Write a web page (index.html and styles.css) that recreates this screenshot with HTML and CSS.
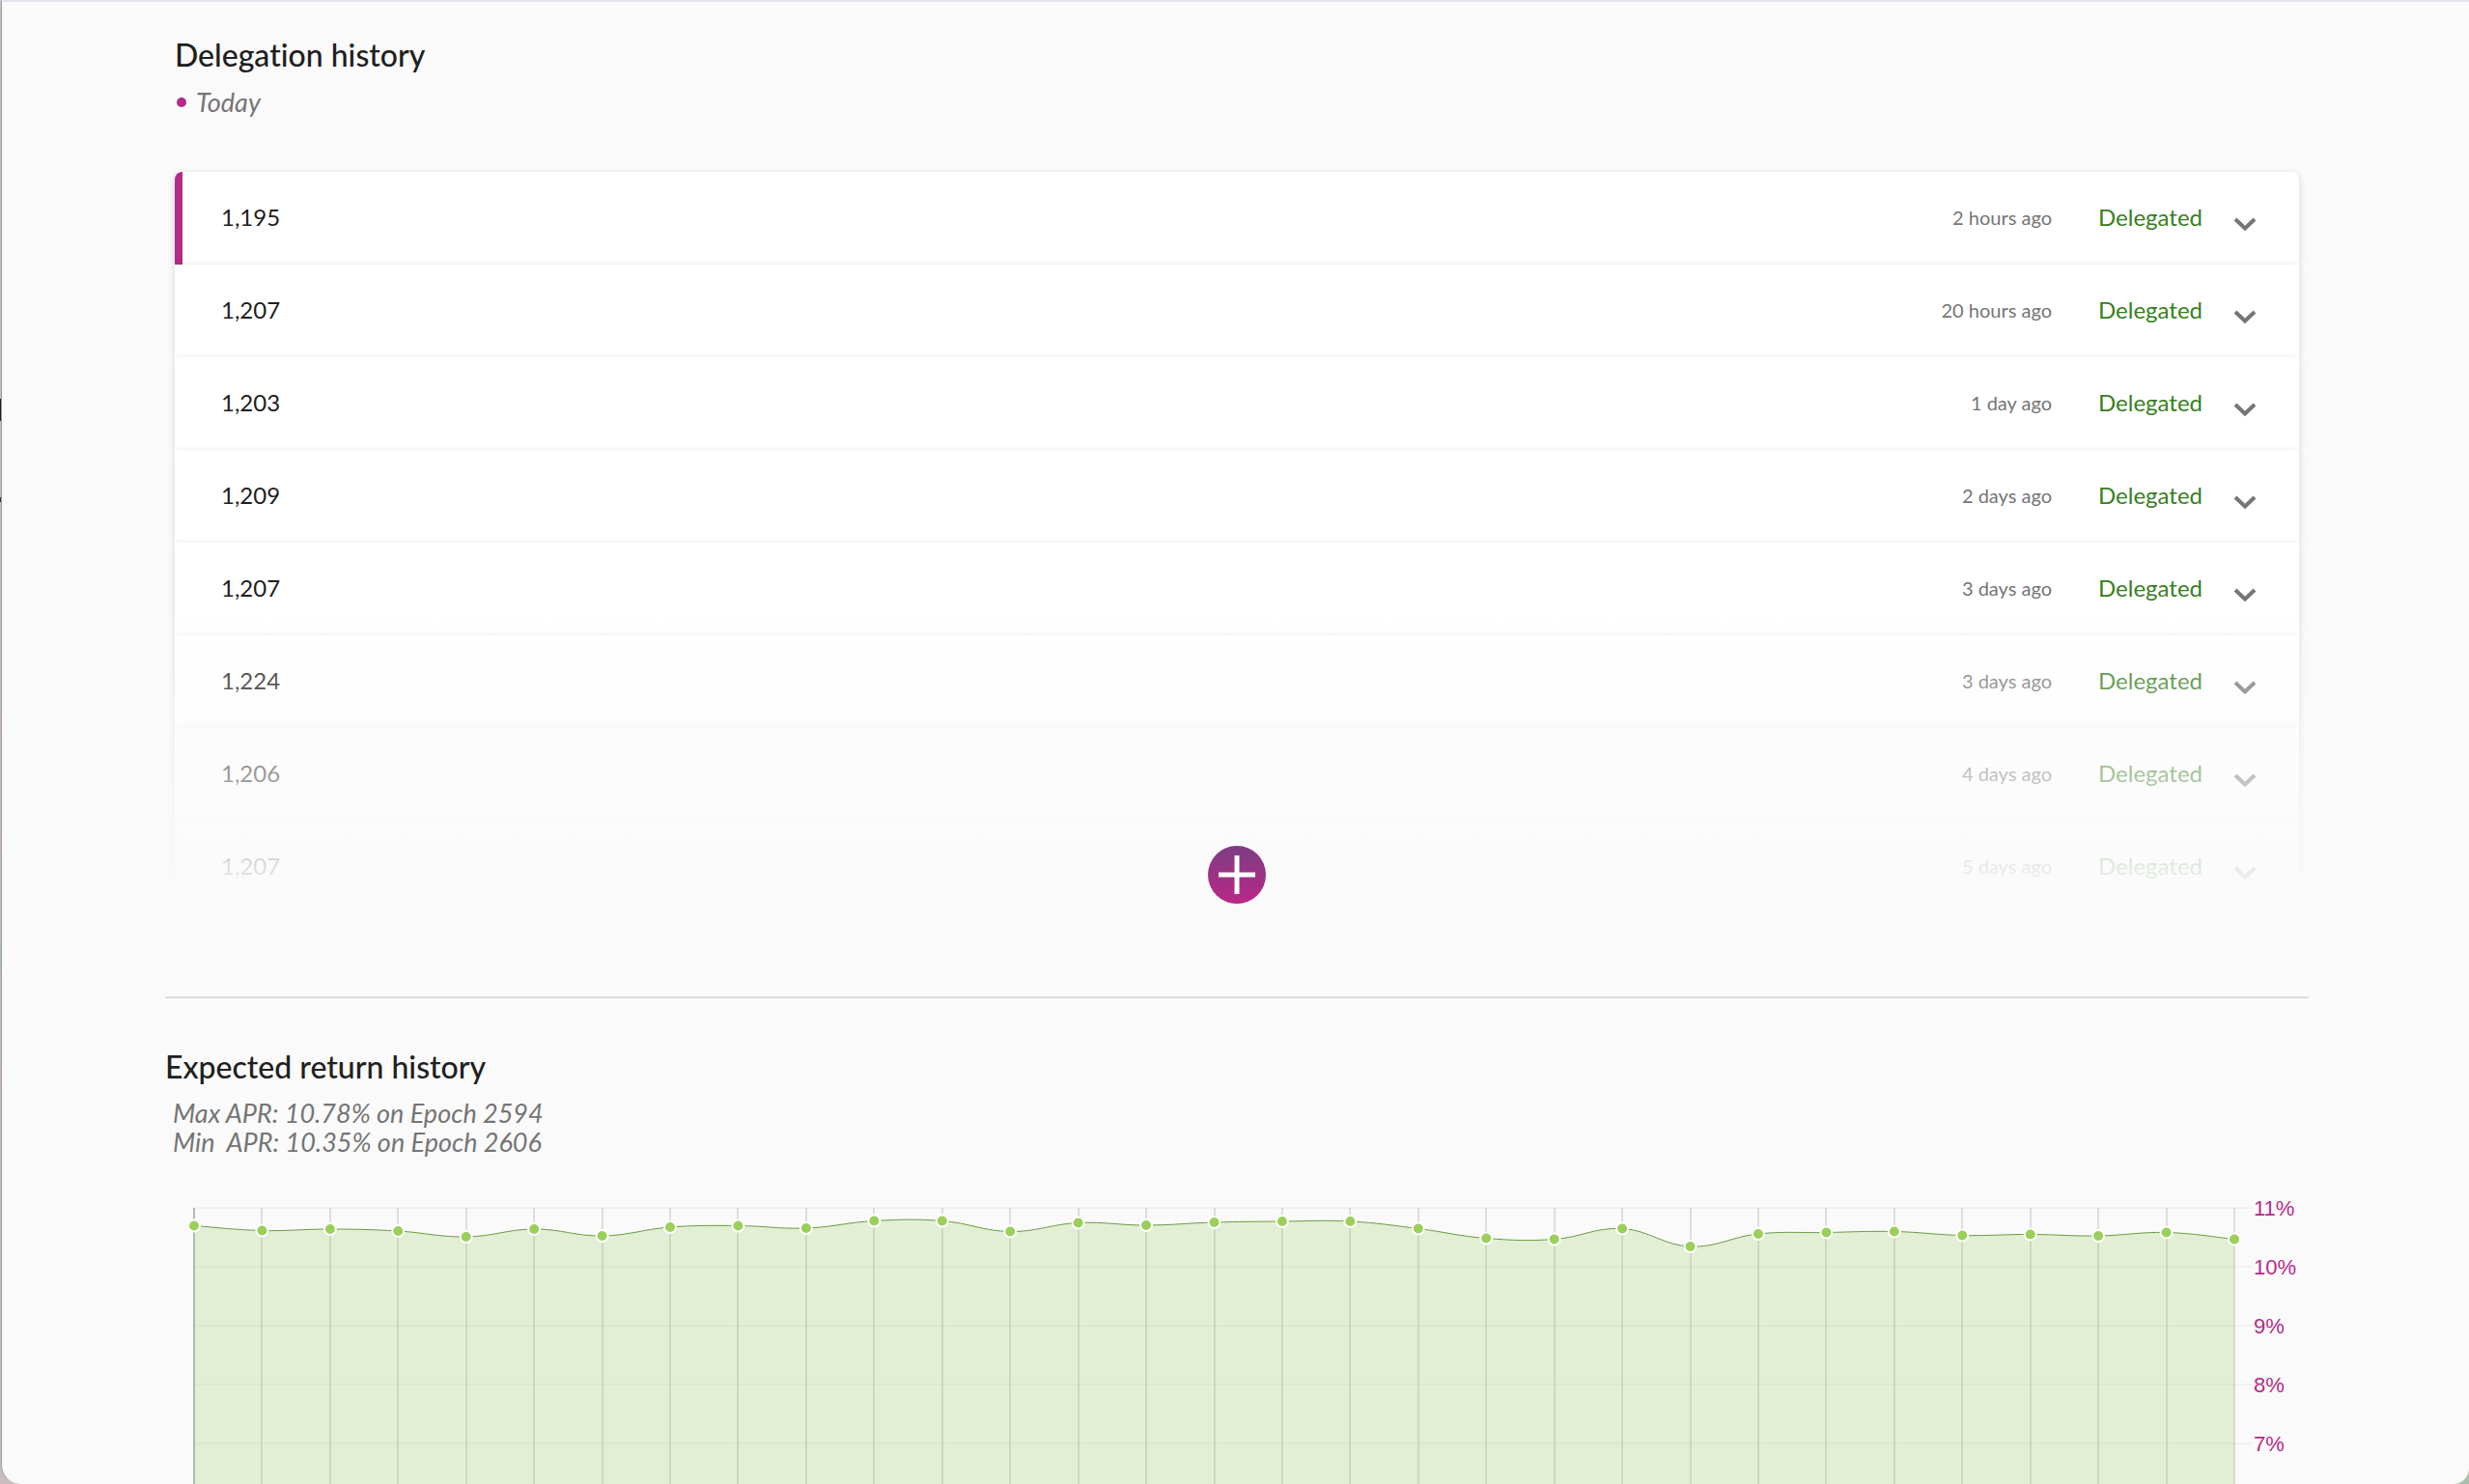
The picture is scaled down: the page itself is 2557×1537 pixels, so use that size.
FILE: index.html
```html
<!DOCTYPE html>
<html lang="en">
<head>
<meta charset="utf-8">
<title>Delegation history</title>
<link rel="stylesheet" href="styles.css">
</head>
<body>
<svg class="defs" aria-hidden="true">
  <symbol id="chevron" viewBox="0 0 24 16"><path d="M2 3 L12 12.500 L22 3" fill="none" stroke="currentColor" stroke-width="4"/></symbol>
</svg>
<div class="window">
  <main class="page">
    <section class="delegations">
      <h2 class="title">Delegation history</h2>
      <p class="legend"><span class="dot"></span>Today</p>
      <div class="history">
        <ul class="rows">
          <li><button class="row row-today" type="button"><span class="amount">1,195</span><span class="time">2 hours ago</span><span class="status">Delegated</span><svg class="chevron"><use href="#chevron"/></svg></button></li>
          <li><button class="row" type="button"><span class="amount">1,207</span><span class="time">20 hours ago</span><span class="status">Delegated</span><svg class="chevron"><use href="#chevron"/></svg></button></li>
          <li><button class="row" type="button"><span class="amount">1,203</span><span class="time">1 day ago</span><span class="status">Delegated</span><svg class="chevron"><use href="#chevron"/></svg></button></li>
          <li><button class="row" type="button"><span class="amount">1,209</span><span class="time">2 days ago</span><span class="status">Delegated</span><svg class="chevron"><use href="#chevron"/></svg></button></li>
          <li><button class="row" type="button"><span class="amount">1,207</span><span class="time">3 days ago</span><span class="status">Delegated</span><svg class="chevron"><use href="#chevron"/></svg></button></li>
          <li><button class="row" type="button"><span class="amount">1,224</span><span class="time">3 days ago</span><span class="status">Delegated</span><svg class="chevron"><use href="#chevron"/></svg></button></li>
          <li><button class="row" type="button"><span class="amount">1,206</span><span class="time">4 days ago</span><span class="status">Delegated</span><svg class="chevron"><use href="#chevron"/></svg></button></li>
          <li><button class="row" type="button"><span class="amount">1,207</span><span class="time">5 days ago</span><span class="status">Delegated</span><svg class="chevron"><use href="#chevron"/></svg></button></li>
        </ul>
        <div class="fade">
          <button class="more" type="button" aria-label="Show more">
            <svg viewBox="0 0 60 60"><path d="M11 30H49M30 10V50" stroke="#fff" stroke-width="5"/></svg>
          </button>
        </div>
      </div>
    </section>
    <hr class="divider">
    <section class="returns">
      <h2 class="title">Expected return history</h2>
      <p class="range">Max APR: 10.78% on Epoch 2594<br>Min&nbsp; APR: 10.35% on Epoch 2606</p>
      <svg class="chart" id="chart" viewBox="0 0 2220 740" role="img" aria-label="Expected return by epoch"></svg>
    </section>
  </main>
</div>
<script src="chart.js"></script>
</body>
</html>
```
FILE: styles.css
```css
* { box-sizing: border-box; }

body {
  margin: 0;
  background:
    linear-gradient(90deg, transparent 50%, #a9bfae 50%) 0 100% / 100% 20px no-repeat,
    linear-gradient(#c0c0c2 413px, #1c1a22 413px 436px, #c0c0c2 436px 515px, #333 515px 520px, #c0c0c2 520px 737px, #d3b5b8 737px 766px, #c0c0c2 766px 857px, #d3b5b8 857px 886px, #c0c0c2 886px 977px, #a5bcc9 977px 1006px, #c0c0c2 1006px 1097px, #d3b5b8 1097px 1126px, #c0c0c2 1126px 1525px, #cdbcbc 1525px);
  color: #202020;
  font-family: Lato, "Open Sans", sans-serif;
  font-variant-ligatures: no-common-ligatures;
}

.defs { position: absolute; width: 0; height: 0; }

.window {
  height: 100vh;
  overflow: hidden;
  margin-left: 1px;
  background: #fafafa;
  border-top: 2px solid #e3e3ee;
  border-left: 1px solid #9c9c9e;
  border-radius: 0 0 16px 20px;
}

.page { padding: 35px 166px 0 169px; }

.delegations { padding: 0 10px; }

.title {
  margin: 0;
  font-size: 32px;
  line-height: 40px;
  font-weight: 500;
}

.legend, .range {
  margin: 0;
  color: #757575;
  font-size: 27px;
  line-height: 30px;
  font-style: italic;
}

.legend {
  display: flex;
  align-items: center;
  gap: 10px;
  padding: 14px 0 0 2px;
}

.dot {
  width: 10px;
  height: 10px;
  border-radius: 50%;
  background: #b52b88;
}

.history { position: relative; padding: 57px 0 32px; }

.rows { margin: 0; padding: 0; list-style: none; }

.row {
  position: relative;
  display: flex;
  align-items: center;
  width: 100%;
  height: 96px;
  padding: 0 44px 2px 48px;
  border: 0;
  background: #fff;
  box-shadow: 0 4px 2px -2px rgba(0, 0, 0, .12), 0 2px 8px rgba(0, 0, 0, .14);
  color: #202020;
  font: 24px/32px Lato, "Open Sans", sans-serif;
  text-align: left;
}

.row-today {
  padding-left: 40px;
  border-left: 8px solid #b52b88;
  border-radius: 8px 8px 0 0;
}

.amount { flex: 1; }
.time { color: #757575; font-size: 20px; }
.status { width: 112px; margin: 0 28px 0 48px; color: #378021; }
.chevron { width: 24px; height: 16px; margin-top: 14px; color: #757575; }

.fade {
  position: absolute;
  inset: 489px -10px 0;
  display: flex;
  justify-content: center;
  align-items: flex-end;
  padding-bottom: 42px;
  background: linear-gradient(rgba(250, 250, 250, 0) 12px, #fafafa 332px);
}

.more {
  width: 60px;
  height: 60px;
  padding: 0;
  border: 0;
  border-radius: 50%;
  background: linear-gradient(#7d3c84, #b92887);
}
.more svg { display: block; }

.divider {
  height: 2px;
  margin: 54px 0 0;
  border: 0;
  background: #dedede;
}

.returns { padding-top: 51px; }
.range { padding: 13px 0 0 8px; }

.chart { display: block; width: 100%; margin-top: 38px; }
.chart .grid-y { stroke: rgba(0, 0, 0, .035); stroke-width: 2; }
.chart .grid-x { stroke: rgba(0, 0, 0, .11); stroke-width: 2; }
.chart .axis { stroke: #b9b9b9; stroke-width: 2; }
.chart .area { fill: rgba(142, 202, 76, .22); }
.chart .line { fill: none; stroke: #6c9a44; stroke-width: 1; }
.chart .point { fill: #9bcf5a; stroke: #fff; stroke-width: 2; }
.chart text { fill: #b52b88; font: 22px "Liberation Sans", Arial, sans-serif; }
```
FILE: chart.js
```js
(() => {
  // Vertical position of each epoch's return, in chart units (61 units = 1%).
  const heights = [
    33.5, 38.5, 37, 39, 45, 37, 44, 35, 33.5, 36, 28.5, 28.5, 39.5, 30.5, 33,
    30, 29, 29, 36.5, 46.5, 47.5, 36.5, 55, 42, 40.5, 39.5, 43.5, 42.5, 44, 40.5, 47.5
  ];
  const left = 30, right = 2143, top = 15, bottom = 740;
  const labels = ['11%', '10%', '9%', '8%', '7%'];
  const step = (right - left) / (heights.length - 1);
  const pts = heights.map((h, i) => [left + i * step, h]);

  // Cubic curve through the points, tension 0.4.
  function curve(p) {
    const control = (i, sign) => {
      const prev = p[Math.max(i - 1, 0)], next = p[Math.min(i + 1, p.length - 1)];
      return [p[i][0] + sign * 0.2 * (next[0] - prev[0]), p[i][1] + sign * 0.2 * (next[1] - prev[1])];
    };
    let d = 'M' + p[0];
    for (let i = 1; i < p.length; i++) d += 'C' + control(i - 1, 1) + ' ' + control(i, -1) + ' ' + p[i];
    return d;
  }

  let out = '';
  const path = curve(pts);
  labels.forEach((label, i) => {
    const y = top + i * 61;
    out += `<line class="grid-y" x1="${left}" y1="${y}" x2="2162" y2="${y}"/>`;
    out += `<text x="2163" y="${y + 8}">${label}</text>`;
  });
  pts.forEach(([x], i) => {
    out += `<line class="${i ? 'grid-x' : 'axis'}" x1="${Math.round(x)}" y1="${top}" x2="${Math.round(x)}" y2="${bottom}"/>`;
  });
  out += `<path class="area" d="${path}V${bottom}H${left}Z"/><path class="line" d="${path}"/>`;
  pts.forEach(([x, y]) => { out += `<circle class="point" cx="${x}" cy="${y}" r="6"/>`; });
  document.getElementById('chart').innerHTML = out;
})();
```
